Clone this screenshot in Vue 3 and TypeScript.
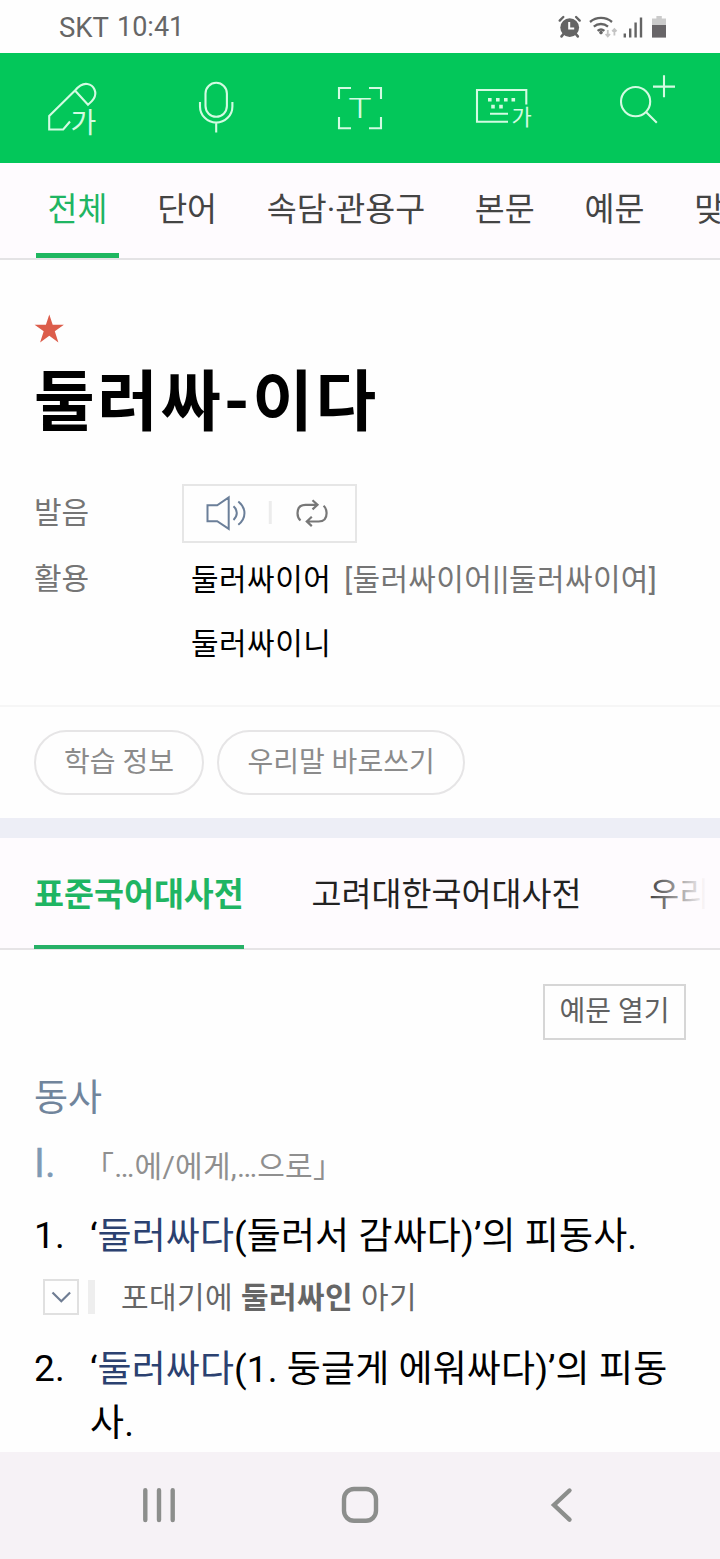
<script setup lang="ts">
import { ref } from 'vue'

interface Tab {
  id: string
  label: string
}

const categories: Tab[] = [
  { id: 'all', label: '전체' },
  { id: 'word', label: '단어' },
  { id: 'idiom', label: '속담·관용구' },
  { id: 'body', label: '본문' },
  { id: 'example', label: '예문' },
  { id: 'spelling', label: '맞춤법' },
]
const dictionaries: Tab[] = [
  { id: 'standard', label: '표준국어대사전' },
  { id: 'korea', label: '고려대한국어대사전' },
  { id: 'urimal', label: '우리말샘' },
]
const chips: string[] = ['학습 정보', '우리말 바로쓰기']

const category = ref('all')
const dictionary = ref('standard')
</script>

<template>
  <div class="screen">
    <header class="status">
      <span class="carrier">SKT</span>
      <span class="clock">10:41</span>
      <svg class="status-icons" width="112" height="26" viewBox="556 13 112 26">
        <g fill="none" stroke="#646464" stroke-linecap="round">
          <path d="M559.7 19.6l3.6-3.6M579.7 19.6l-3.6-3.6" stroke-width="2.4" />
          <path d="M563.5 33l-2 2.4M575.8 33l2 2.4" stroke-width="2.6" />
          <path d="M590 21a17 17 0 0 1 22 0M593.8 25.6a11 11 0 0 1 14.2 0M597.6 29.8a5.600 5.600 0 0 1 6.800 0" stroke-width="2.3" stroke-linecap="butt" />
        </g>
        <circle cx="569.7" cy="26.6" r="9.4" fill="#646464" />
        <path d="M569.2 21v6.6h5" fill="none" stroke="#fff" stroke-width="2" />
        <circle cx="601" cy="31.6" r="1.8" fill="#646464" />
        <path d="M607.8 29v6M605.6 33l2.2 2.4 2.2-2.4M614.4 34.4v-6M612.2 30.4l2.2-2.4 2.2 2.4" fill="none" stroke="#c4c4c4" stroke-width="1.8" />
        <path d="M624.8 32.4v4.2M630.2 27.4v9.2M635.6 21.6v15M641 16.6v20" fill="none" stroke="#646464" stroke-width="2.4" />
        <path d="M656.4 15h5.4v2.4h4.2v7h-14v-7h4.4z" fill="#cbcbcb" />
        <path d="M652 24h14v12.6h-14z" fill="#686568" />
      </svg>
    </header>

    <nav class="tools">
      <svg class="tool" viewBox="0 53 144 110">
        <path d="M70 121.500l-6.800 8H49.200V116L75 90.500c3.400-4 8-7.300 12.300-6.500 7 1.200 10 8.600 6.500 14.600-1.200 2.200-3.300 4-5.800 6.200L75 90.500" />
        <text x="70.500" y="133.300" font-size="28">가</text>
      </svg>
      <svg class="tool" viewBox="144 53 144 110">
        <rect x="205.500" y="82.800" width="21.400" height="34" rx="10.700" />
        <path d="M200 102v4.400a16.200 16.200 0 0 0 32.400 0V102M216.200 123v9.600" />
      </svg>
      <svg class="tool" viewBox="288 53 144 110">
        <path d="M351 88h-12v11M369 88h12v11M339 117v11.200h12M381 117v11.200h-12" />
        <text class="latin" x="348.300" y="118" font-size="27" textLength="23.400" lengthAdjust="spacingAndGlyphs">T</text>
      </svg>
      <svg class="tool" viewBox="432 53 144 110">
        <path d="M508 121.800h-31V90h49.300v14.500M490 113.800h18" />
        <path class="keys" d="M488 99.700h3.600M496 99.700h3.600M504 99.700h3.600M511.500 99.700h3.600M491.200 106.600h3.600M499.200 106.600h3.600" />
        <text x="511.500" y="124.500" font-size="22">가</text>
      </svg>
      <svg class="tool" viewBox="576 53 144 110">
        <circle cx="635.600" cy="101.600" r="14.600" />
        <path d="M646 112l10.800 10.800M653 86.600h22M664 75.300v22" />
      </svg>
    </nav>

    <nav class="categories">
      <button
        v-for="tab in categories"
        :key="tab.id"
        class="category"
        :class="{ active: tab.id === category }"
        @click="category = tab.id"
      >{{ tab.label }}</button>
    </nav>

    <main class="entry">
      <svg class="star" width="30" height="30" viewBox="0 0 30 30">
        <path d="M15.300.6l3.400 10.200h11.200l-9.100 6.500 3.600 11.300-9.100-6.900-9.200 6.900 3.600-11.300-9.100-6.500h11.300z" />
      </svg>
      <h1>둘러싸-이다</h1>
      <div class="info">
        <span class="label">발음</span>
        <div class="sound">
          <svg width="171" height="55" viewBox="184 486 171 55">
            <g fill="none" stroke-width="2">
              <path d="M207.500 505.300h9.700l11.500-7.800v31.400l-11.500-7.700h-9.700zM233.500 506.300c4.400 4 4.400 9.600 0 13.600M238.300 501.500c8.200 6.700 8.200 16.700 0 23.200" stroke="#6b7f99" />
              <path d="M270.300 501v23" stroke="#ececec" stroke-width="3" />
              <path d="M300.500 520.500c-2-1.800-3-4.200-3-7.200 0-5.300 2.800-8.500 8-8.500h11.500M312.500 500.200l5 4.600-5 4.600M323.600 505.800c2 1.800 3 4.200 3 7.200 0 5.300-2.800 8.500-8 8.500H307M311.800 516.800l-5 4.700 5 4.600" stroke="#777" stroke-width="2.200" />
            </g>
          </svg>
        </div>
      </div>
      <div class="info forms">
        <span class="label">활용</span>
        <div class="variants">
          <p>둘러싸이어 <span class="reading">[둘러싸이어<span class="pipes">||</span>둘러싸이여]</span></p>
          <p>둘러싸이니</p>
        </div>
      </div>
    </main>

    <div class="chips">
      <button v-for="chip in chips" :key="chip" class="chip">{{ chip }}</button>
    </div>

    <nav class="dictionaries">
      <button
        v-for="tab in dictionaries"
        :key="tab.id"
        class="dictionary"
        :class="{ active: tab.id === dictionary }"
        @click="dictionary = tab.id"
      >{{ tab.label }}</button>
    </nav>

    <section class="meanings">
      <button class="open">예문 열기</button>
      <h2>동사</h2>
      <div class="pattern"><span class="roman">I.</span><span class="frame">「…에/에게,…으로」</span></div>
      <div class="sense">
        <span class="num">1.</span>
        <p>‘<a>둘러싸다</a>(둘러서 감싸다)’의 피동사.</p>
      </div>
      <div class="example">
        <button class="toggle">
          <svg width="32" height="32" viewBox="0 0 32 32"><path d="M7.500 11.500l8.800 8.800 8.800-8.800" /></svg>
        </button>
        <span class="bar"></span>
        <p>포대기에 <b>둘러싸인</b> 아기</p>
      </div>
      <div class="sense">
        <span class="num">2.</span>
        <p>‘<a>둘러싸다</a>(1. 둥글게 에워싸다)’의 피동<br />사.</p>
      </div>
    </section>

    <footer class="system">
      <svg width="720" height="107" viewBox="0 1452 720 107">
        <path d="M145.300 1490.300v29.700M159 1490.300v29.700M172.700 1490.300v29.700" />
        <rect x="344" y="1489" width="32" height="31.800" rx="10" />
        <path d="M569.500 1490.500L554 1505l15.500 14.700" />
      </svg>
    </footer>
  </div>
</template>

<style>
body {
  margin: 0;
  background: #fefefe;
}
</style>

<style scoped>
.screen {
  width: 720px;
  height: 1559px;
  display: flex;
  flex-direction: column;
  overflow: hidden;
  background: #fefefe;
  color: #000;
  font-family: Roboto, 'Noto Sans CJK KR', sans-serif;
}
button {
  margin: 0;
  padding: 0;
  border: 0;
  background: none;
  font: inherit;
  color: inherit;
  white-space: nowrap;
}
h1, h2, p {
  margin: 0;
  font-weight: 400;
  white-space: nowrap;
}
svg {
  display: block;
}
.status {
  box-sizing: border-box;
  height: 53px;
  flex: none;
  display: flex;
  align-items: center;
  padding: 1px 52px 0 59px;
  font-size: 27px;
  color: #666;
}
.carrier {
  width: 58px;
  font-size: 27.500px;
}
.status-icons {
  margin: -1px 0 0 auto;
}
.tools {
  height: 110px;
  flex: none;
  display: flex;
  background: #03c75a;
}
.tool {
  width: 144px;
  height: 110px;
  fill: none;
  stroke: #d3fbe2;
  stroke-width: 2.100;
}
.tool text {
  fill: #d3fbe2;
  stroke: none;
  font-family: 'Noto Sans CJK KR', sans-serif;
}
.tool .latin {
  font-family: Roboto, sans-serif;
  font-weight: 300;
}
.tool .keys {
  stroke-width: 3.600;
}
.categories {
  box-sizing: border-box;
  height: 97px;
  flex: none;
  display: flex;
  gap: 26.700px;
  padding-left: 36px;
  border-bottom: 2px solid #e4e3e5;
  background: #fefbfe;
  overflow: hidden;
}
.category {
  flex: none;
  height: 95px;
  padding: 0 11.500px 8px;
  font-size: 32.600px;
  color: #444;
}
.category.active {
  padding-bottom: 3px;
  border-bottom: 5px solid #1fb760;
  color: #1fb563;
}
.entry {
  box-sizing: border-box;
  height: 447px;
  flex: none;
  padding: 54px 34px 0;
  border-bottom: 2px solid #f6f6f6;
}
.star {
  fill: #dc5d4b;
}
h1 {
  box-sizing: border-box;
  height: 140px;
  padding-top: 21px;
  line-height: 75px;
  font-size: 66px;
  font-weight: 700;
  letter-spacing: 2.500px;
}
.info {
  display: flex;
  font-size: 30px;
  color: #757575;
}
.label {
  width: 148px;
  flex: none;
  line-height: 58px;
}
.sound {
  border: 2px solid #e6e6e6;
}
.forms {
  margin-top: 3px;
}
.forms .label,
.variants p {
  height: 65px;
  line-height: 65px;
}
.variants {
  padding-left: 9px;
  letter-spacing: 0.450px;
  color: #000;
}
.reading {
  margin-left: 5px;
  letter-spacing: 0.350px;
  color: #757575;
}
.pipes {
  font-size: 33px;
}
.chips {
  box-sizing: border-box;
  height: 111px;
  flex: none;
  display: flex;
  gap: 13px;
  padding: 23px 34px;
}
.chip {
  box-sizing: border-box;
  height: 65px;
  padding: 0 28px 6px;
  border: 2px solid #e6e5e6;
  border-radius: 33px;
  font-size: 28px;
  color: #8b8b8b;
}
.chip + .chip {
  padding: 0 28.400px 6px;
}
.dictionaries {
  position: relative;
  box-sizing: border-box;
  height: 132px;
  flex: none;
  display: flex;
  gap: 67.800px;
  padding-left: 34px;
  border-top: 20px solid #edeef6;
  border-bottom: 2px solid #e6e4e6;
  background: #fefbfe;
}
.dictionaries::after {
  content: '';
  position: absolute;
  top: 0;
  right: 0;
  width: 80px;
  height: 110px;
  background: linear-gradient(to right, #fefbfe00, #fefbfe 66px);
}
.dictionary {
  flex: none;
  height: 111px;
  padding-bottom: 4px;
  font-size: 32.600px;
  color: #222;
}
.dictionary.active {
  padding-bottom: 0;
  border-bottom: 4px solid #27b067;
  font-weight: 700;
  color: #1fb563;
}
.meanings {
  flex: 1;
  min-height: 0;
  display: flex;
  flex-direction: column;
  padding: 34px 34px 0;
}
.open {
  align-self: flex-end;
  box-sizing: border-box;
  width: 143px;
  height: 56px;
  padding-bottom: 7px;
  border: 2px solid #d6d6d6;
  font-size: 28px;
  color: #606060;
}
h2 {
  margin-top: 34px;
  line-height: 50px;
  font-size: 37px;
  color: #71859c;
}
.pattern {
  display: flex;
  align-items: baseline;
  margin-top: 15px;
  line-height: 50px;
}
.roman {
  width: 50px;
  font-size: 40px;
  color: #7f9ab5;
  -webkit-text-stroke: 0.400px #7f9ab5;
}
.frame {
  font-size: 30px;
  letter-spacing: 0.250px;
  color: #8f8f8f;
}
.sense {
  display: flex;
  font-size: 37px;
  line-height: 54px;
  letter-spacing: 0.100px;
}
.pattern + .sense {
  margin-top: 18px;
}
.num {
  width: 56px;
  flex: none;
  line-height: 52px;
}
.sense a {
  color: #2b4170;
}
.example {
  height: 54px;
  margin: 6px 0 19px 9px;
  display: flex;
  align-items: center;
  font-size: 30px;
  letter-spacing: 0.420px;
  color: #666;
}
.example p {
  padding-bottom: 4px;
}
.toggle {
  border: 2px solid #e0e0e0;
}
.toggle path {
  fill: none;
  stroke: #6f7d93;
  stroke-width: 2.200;
}
.bar {
  width: 7px;
  height: 34px;
  margin: 0 26px 0 9px;
  background: #eee;
}
.system {
  height: 107px;
  flex: none;
  background: #f6f2f6;
}
.system svg {
  fill: none;
  stroke: #8c8e8c;
  stroke-width: 4.400;
  stroke-linecap: round;
}
</style>
